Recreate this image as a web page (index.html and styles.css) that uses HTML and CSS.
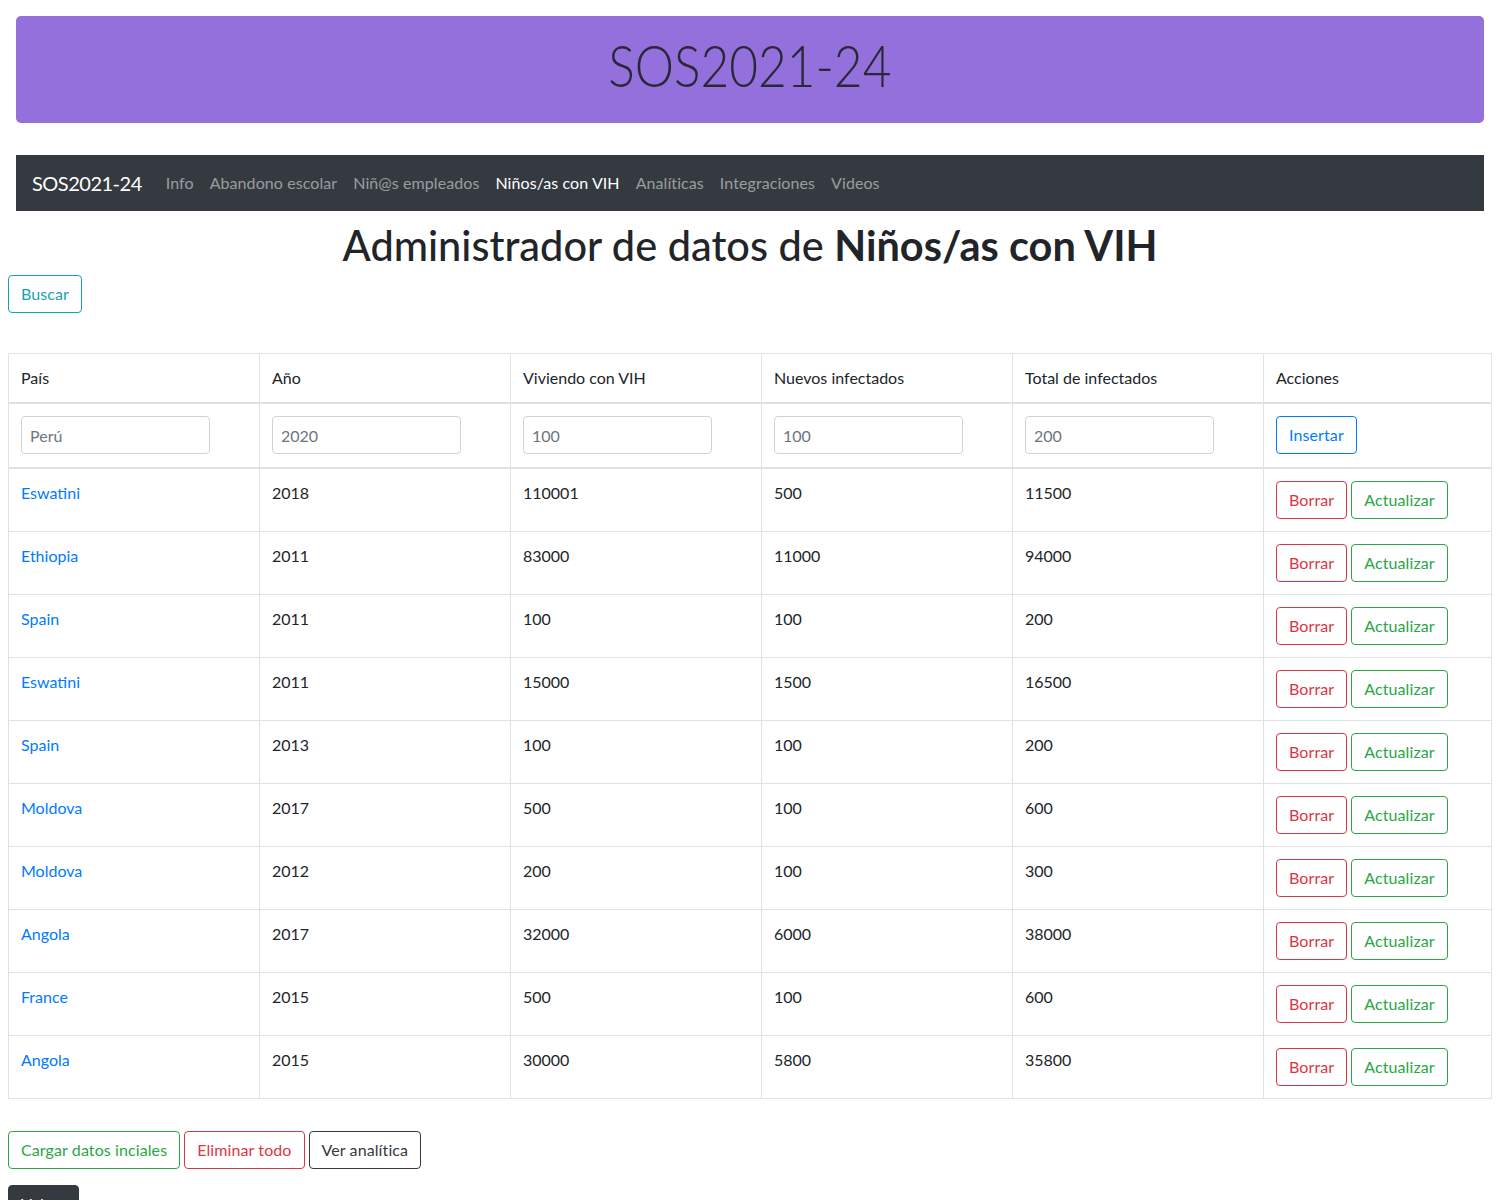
FILE: index.html
```html
<!DOCTYPE html>
<html lang="es">
<head>
<meta charset="utf-8">
<title>SOS2021-24</title>
<link rel="stylesheet" href="styles.css">
</head>
<body>
<header class="jumbotron"><span class="jumbo-title">SOS2021-24</span></header>

<nav class="navbar">
  <a class="brand" href="#">SOS2021-24</a>
  <ul class="nav-list">
    <li><a class="nav-link" href="#">Info</a></li>
    <li><a class="nav-link" href="#">Abandono escolar</a></li>
    <li><a class="nav-link" href="#">Niñ@s empleados</a></li>
    <li><a class="nav-link active" href="#">Niños/as con VIH</a></li>
    <li><a class="nav-link" href="#">Analíticas</a></li>
    <li><a class="nav-link" href="#">Integraciones</a></li>
    <li><a class="nav-link" href="#">Videos</a></li>
  </ul>
</nav>

<main>
  <h1 class="page-title">Administrador de datos de <strong>Niños/as con VIH</strong></h1>
  <div class="search-row"><button class="btn btn-info">Buscar</button></div>

  <table class="data-table">
    <colgroup>
      <col class="c-std"><col class="c-std"><col class="c-std"><col class="c-std"><col class="c-std"><col class="c-act">
    </colgroup>
    <thead>
      <tr><th>País</th><th>Año</th><th>Viviendo con VIH</th><th>Nuevos infectados</th><th>Total de infectados</th><th>Acciones</th></tr>
    </thead>
    <tbody>
      <tr class="input-row">
        <td><input class="form-input" placeholder="Perú"></td>
        <td><input class="form-input" placeholder="2020"></td>
        <td><input class="form-input" placeholder="100"></td>
        <td><input class="form-input" placeholder="100"></td>
        <td><input class="form-input" placeholder="200"></td>
        <td><button class="btn btn-primary">Insertar</button></td>
      </tr>
      <tr><td><a href="#">Eswatini</a></td><td>2018</td><td>110001</td><td>500</td><td>11500</td><td><div class="actions"><button class="btn btn-danger">Borrar</button><button class="btn btn-success">Actualizar</button></div></td></tr>
      <tr><td><a href="#">Ethiopia</a></td><td>2011</td><td>83000</td><td>11000</td><td>94000</td><td><div class="actions"><button class="btn btn-danger">Borrar</button><button class="btn btn-success">Actualizar</button></div></td></tr>
      <tr><td><a href="#">Spain</a></td><td>2011</td><td>100</td><td>100</td><td>200</td><td><div class="actions"><button class="btn btn-danger">Borrar</button><button class="btn btn-success">Actualizar</button></div></td></tr>
      <tr><td><a href="#">Eswatini</a></td><td>2011</td><td>15000</td><td>1500</td><td>16500</td><td><div class="actions"><button class="btn btn-danger">Borrar</button><button class="btn btn-success">Actualizar</button></div></td></tr>
      <tr><td><a href="#">Spain</a></td><td>2013</td><td>100</td><td>100</td><td>200</td><td><div class="actions"><button class="btn btn-danger">Borrar</button><button class="btn btn-success">Actualizar</button></div></td></tr>
      <tr><td><a href="#">Moldova</a></td><td>2017</td><td>500</td><td>100</td><td>600</td><td><div class="actions"><button class="btn btn-danger">Borrar</button><button class="btn btn-success">Actualizar</button></div></td></tr>
      <tr><td><a href="#">Moldova</a></td><td>2012</td><td>200</td><td>100</td><td>300</td><td><div class="actions"><button class="btn btn-danger">Borrar</button><button class="btn btn-success">Actualizar</button></div></td></tr>
      <tr><td><a href="#">Angola</a></td><td>2017</td><td>32000</td><td>6000</td><td>38000</td><td><div class="actions"><button class="btn btn-danger">Borrar</button><button class="btn btn-success">Actualizar</button></div></td></tr>
      <tr><td><a href="#">France</a></td><td>2015</td><td>500</td><td>100</td><td>600</td><td><div class="actions"><button class="btn btn-danger">Borrar</button><button class="btn btn-success">Actualizar</button></div></td></tr>
      <tr><td><a href="#">Angola</a></td><td>2015</td><td>30000</td><td>5800</td><td>35800</td><td><div class="actions"><button class="btn btn-danger">Borrar</button><button class="btn btn-success">Actualizar</button></div></td></tr>
    </tbody>
  </table>

  <div class="bottom-actions">
    <button class="btn btn-success">Cargar datos inciales</button>
    <button class="btn btn-danger">Eliminar todo</button>
    <button class="btn btn-dark">Ver analítica</button>
  </div>
  <div class="back-row"><button class="btn btn-dark-solid">Volver</button></div>
</main>
</body>
</html>
```
FILE: styles.css
```css
* { box-sizing: border-box; }

body {
  margin: 8px;
  font-family: Lato, "Liberation Sans", sans-serif;
  font-size: 16px;
  line-height: 1.5;
  color: #212529;
  background: #fff;
}

a { color: #007bff; text-decoration: none; }

.jumbotron {
  margin: 8px 8px 0;
  height: 107px;
  background: #9370db;
  border-radius: 5px;
  display: flex;
  align-items: center;
  justify-content: center;
}

.jumbo-title {
  display: inline-block;
  font-family: Lato, sans-serif;
  font-weight: 300;
  font-size: 57px;
  line-height: 1;
  color: #2a2838;
  transform: scaleX(0.87);
  margin-bottom: 8px;
}

.navbar {
  margin: 32px 8px 0;
  height: 56px;
  background: #343a40;
  display: flex;
  align-items: center;
  padding: 0 16px;
}

.brand {
  color: #fff;
  font-size: 20px;
  line-height: 30px;
  margin-right: 16px;
  letter-spacing: -0.5px;
}

.nav-list {
  list-style: none;
  margin: 0;
  padding: 0;
  display: flex;
}

.nav-link {
  display: block;
  padding: 8px 8px;
  color: rgba(255, 255, 255, 0.5);
  font-size: 16px;
  letter-spacing: 0.08px;
}

.nav-link.active { color: #fff; }

.page-title {
  margin: 10px 0 6px;
  text-align: center;
  font-size: 41.5px;
  font-weight: 500;
  line-height: 48px;
  color: #212529;
}

.page-title strong { font-weight: 700; }

.search-row { margin-bottom: 40px; }

.btn {
  display: inline-block;
  font-family: inherit;
  font-size: 16px;
  line-height: 24px;
  letter-spacing: 0.1px;
  padding: 6px 12px;
  border: 1px solid transparent;
  border-radius: 4px;
  background: transparent;
  cursor: pointer;
}

.btn-info { color: #17a2b8; border-color: #17a2b8; }
.btn-primary { color: #007bff; border-color: #007bff; }
.btn-danger { color: #dc3545; border-color: #dc3545; }
.btn-success { color: #28a745; border-color: #28a745; }
.btn-dark { color: #343a40; border-color: #343a40; }
.btn-dark-solid { color: #fff; background: #343a40; border-color: #343a40; }

.data-table {
  width: 100%;
  table-layout: fixed;
  border-collapse: collapse;
  margin-bottom: 32px;
}

.c-std { width: 251px; }
.c-act { width: auto; }

.data-table th,
.data-table td {
  border: 1px solid #dee2e6;
  padding: 12px;
  vertical-align: top;
  text-align: left;
  font-weight: 400;
}

.data-table thead th { border-bottom: 2px solid #dee2e6; }
.input-row td { border-bottom: 2px solid #dee2e6; padding-bottom: 13px; }

.form-input {
  display: block;
  width: 189px;
  height: 38px;
  padding: 6px 8px;
  font-family: inherit;
  font-size: 16px;
  color: #495057;
  border: 1px solid #ced4da;
  border-radius: 4px;
}

.form-input::placeholder { color: #6c757d; }

.actions { display: flex; gap: 4px; }

.bottom-actions { display: flex; gap: 4px; margin-bottom: 16px; }
```
